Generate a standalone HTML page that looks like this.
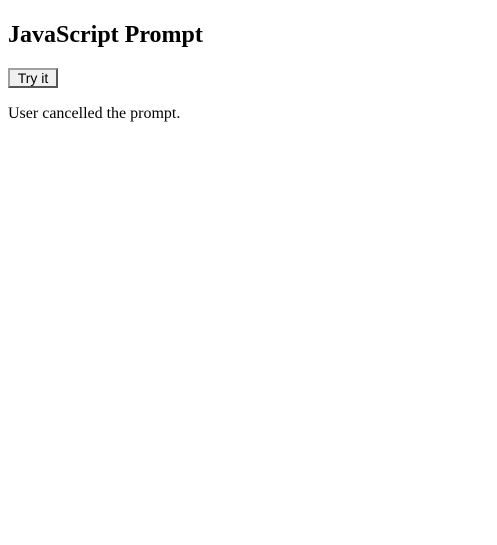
<!DOCTYPE html>
<html><head><style>
body{margin:8px;font-family:"Liberation Serif",serif;background:#fff;color:#000}
h2{font-size:24px;margin:21px 0 0;line-height:28px}
button{position:absolute;left:8px;top:68px;width:50px;height:20px;padding:0;font:14px "Liberation Sans",sans-serif;background:#f0f0f0;border:2px solid;border-color:#a0a0a0 #555 #555 #a0a0a0;}
p{position:absolute;left:8px;top:104px;margin:0;font-size:16px;line-height:19px}
</style></head><body>
<h2>JavaScript Prompt</h2>
<button>Try it</button>
<p>User cancelled the prompt.</p>
</body></html>
